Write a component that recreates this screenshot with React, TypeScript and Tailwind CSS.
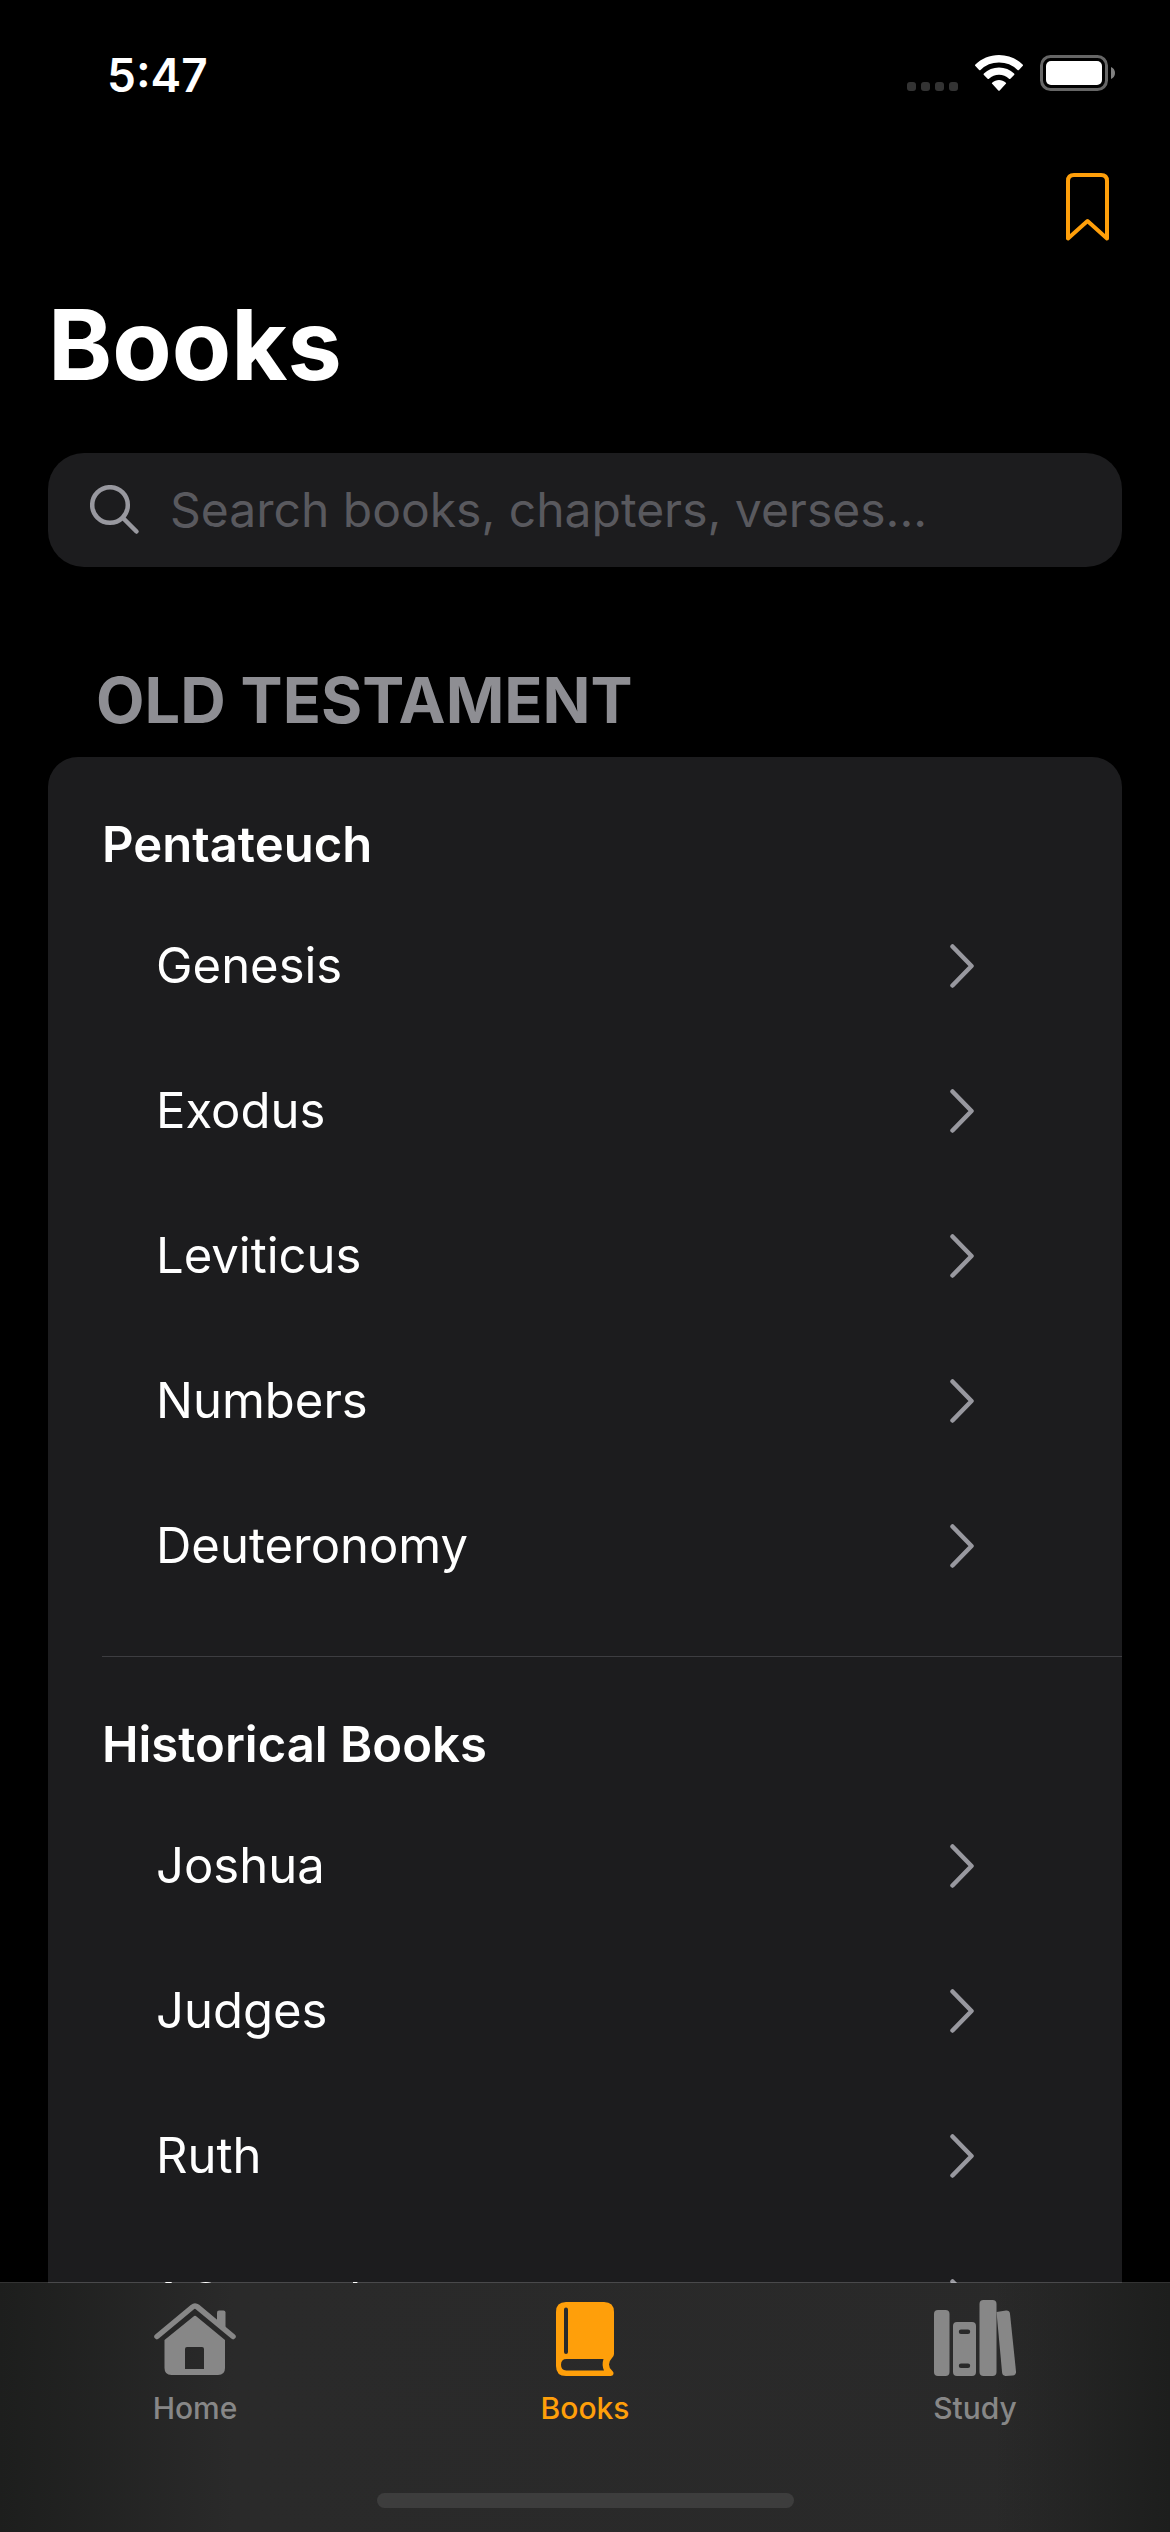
import React from "react";

type Section = { title: string; books: string[] };

const sections: Section[] = [
  { title: "Pentateuch", books: ["Genesis", "Exodus", "Leviticus", "Numbers", "Deuteronomy"] },
  { title: "Historical Books", books: ["Joshua", "Judges", "Ruth", "1 Samuel"] },
];

function StatusBar() {
  return (
    <div className="flex h-[150px] shrink-0 items-start justify-between pr-[55px] pl-[107px]">
      <time className="mt-[45px] text-[46px] leading-[60px] font-semibold">5:47</time>
      <div className="mt-[55px] flex items-end gap-[17px]">
        <div className="flex gap-[5px]">
          {[0, 1, 2, 3].map((n) => (
            <span key={n} className="size-[9px] rounded-[3px] bg-[#333333]" />
          ))}
        </div>
        <svg width="48" height="36" viewBox="0 0 48 36" fill="white" aria-label="Wi-Fi">
          <path d="M24 0C14.800 0 6.400 3.600.4 9.600a1 1 0 0 0 0 1.500l3.700 3.800a1 1 0 0 0 1.400 0A26.500 26.500 0 0 1 24 7.500a26.500 26.500 0 0 1 18.500 7.400 1 1 0 0 0 1.400 0l3.700-3.800a1 1 0 0 0 0-1.500C41.600 3.600 33.200 0 24 0Z" />
          <path d="M24 12.500c-5.800 0-11.100 2.200-15.100 5.900a1 1 0 0 0 0 1.500l3.700 3.800a1 1 0 0 0 1.400 0 14.700 14.700 0 0 1 20 0 1 1 0 0 0 1.400 0l3.700-3.800a1 1 0 0 0 0-1.500C35.100 14.700 29.800 12.500 24 12.500Z" />
          <path d="M24 25c-2.500 0-4.800.900-6.600 2.400a1 1 0 0 0 0 1.600l5.900 6.500a1 1 0 0 0 1.400 0l5.900-6.500a1 1 0 0 0 0-1.600C28.800 25.900 26.500 25 24 25Z" />
        </svg>
        <svg width="75" height="36" viewBox="0 0 75 36" aria-label="Battery">
          <rect x="1.500" y="1.500" width="65" height="33" rx="9" fill="none" stroke="#666666" strokeWidth="3" />
          <rect x="6" y="6" width="56" height="24" rx="5" fill="white" />
          <path d="M71 12c2.500 1 4 3.300 4 6s-1.500 5-4 6Z" fill="#808080" />
        </svg>
      </div>
    </div>
  );
}

function Chevron() {
  return (
    <svg width="24" height="44" viewBox="0 0 24 44" fill="none" stroke="#98989f" strokeWidth="4.500" strokeLinecap="round" strokeLinejoin="round" aria-hidden="true">
      <path d="M2.500 2.500 21.500 22 2.500 41.500" />
    </svg>
  );
}

function HomeIcon() {
  return (
    <svg width="82" height="76" viewBox="0 0 82 76" fill="#878787" aria-hidden="true">
      <path d="M3 36.500 38.500 7Q41 5 43.500 7L79 36.500" fill="none" stroke="#878787" strokeWidth="5.500" strokeLinecap="round" />
      <path d="M63 12.500q0-2 2-2h4.500q2 0 2 2V31L63 24Z" />
      <path fillRule="evenodd" d="M10.500 40 39.500 16.500Q41 15 42.500 16.500L71 40V68q0 7-7 7H17.500q-7 0-7-7ZM33 47q-2 0-2 2v20h19V49q0-2-2-2Z" />
    </svg>
  );
}

function BookIcon() {
  return (
    <svg width="58" height="76" viewBox="0 0 58 76" aria-hidden="true">
      <path
        fill="#ff9f0a"
        fillRule="evenodd"
        d="M10 2H48Q58 2 58 12V54Q58 56 56 58Q53 61 53 64.500Q53 68 56 70.500Q58 72 57.500 74Q57 76 54.500 76H10Q0 76 0 66V12Q0 2 10 2ZM10 7.500Q8 7.500 8 9.500V52Q8 54 10 54T12 52V9.500Q12 7.500 10 7.500ZM10.500 59Q5 59 5 64.800T10.500 70.500H48Q45.500 64.800 47.500 59Z"
      />
    </svg>
  );
}

function StudyIcon() {
  return (
    <svg width="82" height="76" viewBox="0 0 82 76" fill="#878787" aria-hidden="true">
      <rect x="0" y="10" width="15.500" height="66" rx="4" />
      <path
        fillRule="evenodd"
        d="M23 22h15q4 0 4 4v46q0 4-4 4H23q-4 0-4-4V26q0-4 4-4ZM27 29.500a2.200 2.200 0 0 0 0 4.400h7a2.200 2.200 0 0 0 0-4.400ZM27 63.500a2.200 2.200 0 0 0 0 4.400h7a2.200 2.200 0 0 0 0-4.400Z"
      />
      <rect x="45.500" y="0" width="17" height="76" rx="4" />
      <path d="M62.500 12 72 10.500q3.500-.300 4 3.200L82 71.500q.200 3.500-3.200 4L72 76q-3.500.200-3.900-3.400Z" />
    </svg>
  );
}

const tabs = [
  { label: "Home", icon: <HomeIcon />, active: false },
  { label: "Books", icon: <BookIcon />, active: true },
  { label: "Study", icon: <StudyIcon />, active: false },
];

export default function App() {
  return (
    <div className="flex h-screen flex-col overflow-hidden bg-black font-['Inter',sans-serif] text-white">
      <StatusBar />
      <header className="shrink-0 px-12">
        <div className="flex h-[130px] items-start justify-end pt-[23px] pr-[13px]">
          <button type="button" aria-label="Bookmarks">
            <svg width="43" height="68" viewBox="0 0 43 68" fill="none" stroke="#ff9f0a" strokeWidth="4" strokeLinejoin="round" aria-hidden="true">
              <path d="M2 65.500V8q0-6 6-6h27q6 0 6 6v57.500L21.500 48Z" />
            </svg>
          </button>
        </div>
        <h1 className="text-[97px] leading-[130px] font-bold">Books</h1>
        <label className="mt-[43px] flex h-[114px] items-center gap-[30px] rounded-[36px] bg-[#1c1c1e] px-[42px]">
          <svg className="shrink-0" width="50" height="50" viewBox="0 0 50 50" fill="none" stroke="#98989f" strokeWidth="4.500" strokeLinecap="round" aria-hidden="true">
            <circle cx="20" cy="20" r="17.800" />
            <path d="M33 33 46.500 46.500" />
          </svg>
          <input
            type="search"
            aria-label="Search books"
            placeholder="Search books, chapters, verses..."
            className="min-w-0 flex-1 bg-transparent text-[48px] leading-[60px] outline-none placeholder:text-[#59595e]"
          />
        </label>
      </header>
      <main className="flex min-h-0 flex-1 flex-col overflow-hidden px-12 pt-[93px]">
        <h2 className="mb-[17px] shrink-0 pl-[48px] text-[63px] leading-[80px] font-bold text-[#8e8e93]">OLD TESTAMENT</h2>
        <div className="shrink-0 rounded-[30px] bg-[#1c1c1e]">
          {sections.map((section, i) => (
            <section key={section.title} className="pl-[54px]">
              {i > 0 && <hr className="h-px border-0 bg-[#3d3d41]" />}
              <h3 className="pt-[58px] pb-[18px] text-[49px] leading-[60px] font-semibold">{section.title}</h3>
              <ul className="pb-[38px] pl-[54px]">
                {section.books.map((book) => (
                  <li key={book}>
                    <button type="button" className="flex h-[145px] w-full items-center justify-between pr-[148px] text-left text-[49px] leading-[60px]">
                      {book}
                      <Chevron />
                    </button>
                  </li>
                ))}
              </ul>
            </section>
          ))}
        </div>
      </main>
      <footer className="relative -mt-px shrink-0 border-t border-white/20 bg-linear-to-r from-[#1d1e1d] via-[#2a2a2a] via-20% to-[#292929] bg-clip-padding">
        <div className="bg-linear-to-r from-transparent from-85% to-[#1d1e1d]">
          <nav className="grid grid-cols-3 pt-[17px]">
            {tabs.map((tab) => (
              <a
                key={tab.label}
                href={"#" + tab.label.toLowerCase()}
                className={
                  tab.active
                    ? "flex flex-col items-center gap-[12px] text-[30px] leading-[40px] font-medium text-[#ff9f0a]"
                    : "flex flex-col items-center gap-[12px] text-[30px] leading-[40px] font-medium text-[#878787]"
                }
              >
                {tab.icon}
                {tab.label}
              </a>
            ))}
          </nav>
          <div className="flex justify-center pt-[65px] pb-6">
            <div className="h-[15px] w-[417px] rounded-full bg-[#3d3d3d]" />
          </div>
        </div>
      </footer>
    </div>
  );
}
